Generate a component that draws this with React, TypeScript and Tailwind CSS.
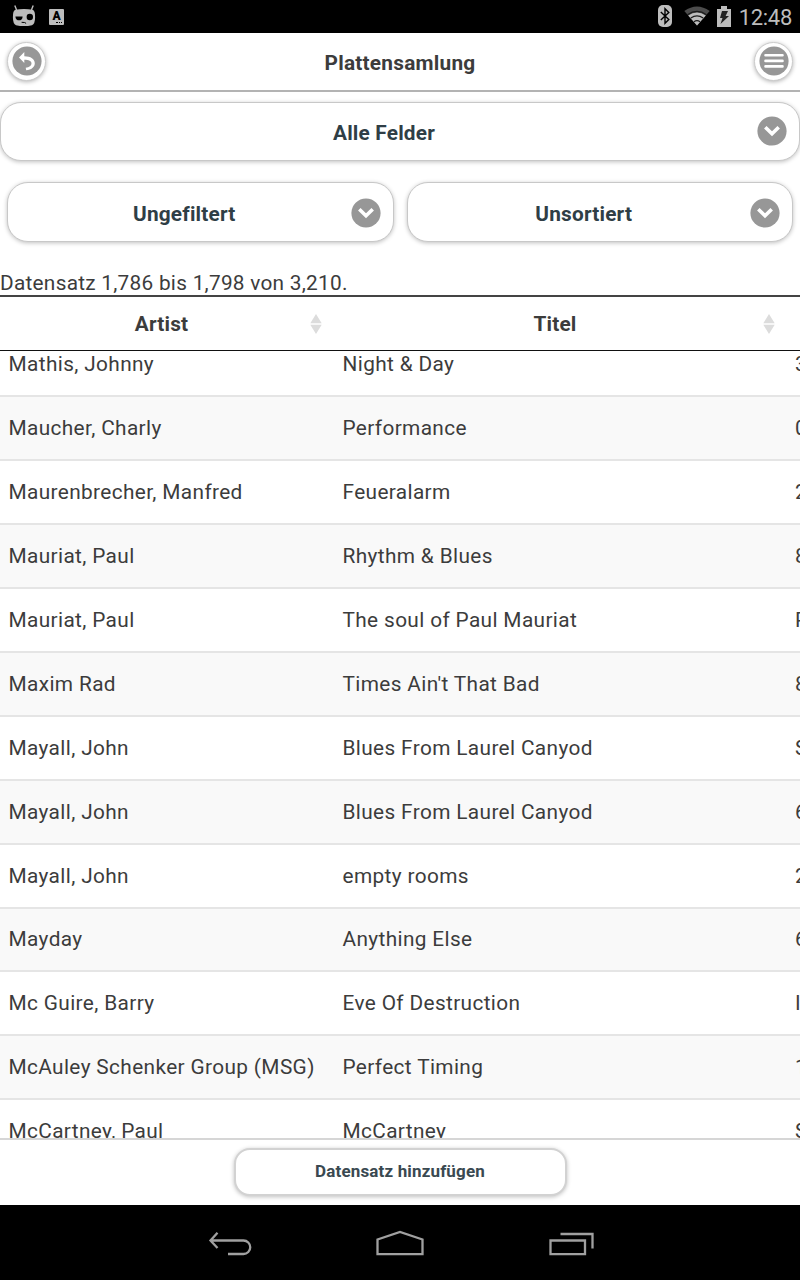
import React from 'react';
import clsx from 'clsx';

interface RecordRow {
  artist: string;
  title: string;
  number: string;
}

const records: RecordRow[] = [
  { artist: 'Mathis, Johnny', title: 'Night & Day', number: '3' },
  { artist: 'Maucher, Charly', title: 'Performance', number: '0' },
  { artist: 'Maurenbrecher, Manfred', title: 'Feueralarm', number: '2' },
  { artist: 'Mauriat, Paul', title: 'Rhythm & Blues', number: '8' },
  { artist: 'Mauriat, Paul', title: 'The soul of Paul Mauriat', number: 'P' },
  { artist: 'Maxim Rad', title: "Times Ain't That Bad", number: '8' },
  { artist: 'Mayall, John', title: 'Blues From Laurel Canyod', number: 'S' },
  { artist: 'Mayall, John', title: 'Blues From Laurel Canyod', number: '6' },
  { artist: 'Mayall, John', title: 'empty rooms', number: '2' },
  { artist: 'Mayday', title: 'Anything Else', number: '6' },
  { artist: 'Mc Guire, Barry', title: 'Eve Of Destruction', number: 'I' },
  { artist: 'McAuley Schenker Group (MSG)', title: 'Perfect Timing', number: '1' },
  { artist: 'McCartney, Paul', title: 'McCartney', number: 'S' },
];

const StatusBar: React.FC = () => (
  <div className="flex h-[33px] shrink-0 items-center bg-black pl-[12px] pr-[8px] text-[#bdbdbd]">
    <svg width="24" height="22" viewBox="0 0 24 22" className="mb-[2px]">
      <path d="M2.800 .5l1.800 4.500M21.200 .5L19.400 5" stroke="#bdbdbd" strokeWidth="1.4" fill="none" />
      <path d="M3.5 4.800Q12 3 20.5 4.800Q23.300 5.600 23.100 12.5Q23 19 20 20.200Q12 22 4 20.200Q1 19 .9 12.5Q.7 5.600 3.5 4.800Z" fill="#bdbdbd" />
      <path d="M3.400 11.400h7.200c.2 5.200-7.200 5.200-7.200 0Z" fill="#000" />
      <circle cx="17.8" cy="12" r="3.2" fill="#000" />
      <path d="M9.600 17.300l3 .2 1.500.9" stroke="#000" strokeWidth="1" fill="none" />
    </svg>
    <div className="ml-[13px] flex h-[16px] w-[15px] flex-col items-center rounded-[1px] bg-[#bdbdbd] text-black">
      <span className="h-[13px] text-[12px] leading-[15px] font-black">A</span>
      <span className="mr-[2px] h-px w-[6px] self-end border-t border-dotted border-black" />
    </div>
    <div className="ml-auto flex items-center">
      <svg width="14" height="22" viewBox="0 0 14 22" className="mb-px">
        <rect width="14" height="22" rx="5" fill="#bdbdbd" />
        <path d="M2.800 7l8 7.600L7 18.300V3.700l3.800 3.800-8 7.500" stroke="#000" strokeWidth="1.4" fill="none" />
      </svg>
      <svg width="26" height="20" viewBox="0 0 26 20" className="ml-[12px] mb-px">
        <path d="M13 19.5L.3 5Q13-4.200 25.700 5Z" fill="#4c4c4c" />
        <path d="M13 19.5L4.200 9.400Q13 3.400 21.800 9.400Z" fill="#bdbdbd" />
        <path d="M3.5 8.700Q13 2 22.5 8.700M6.800 12Q13 7.600 19.200 12M10 15.700Q13 13.700 16 15.700" stroke="#1b1b1b" strokeWidth="1.2" fill="none" />
      </svg>
      <svg width="14" height="21" viewBox="0 0 14 21" className="ml-[7px] mb-px">
        <path d="M4 0h6v3h4v18H0V3h4Z" fill="#bdbdbd" />
        <path d="M5 5h6L8.600 10H12L3.500 18l2-6H3Z" fill="#222" />
      </svg>
      <span className="ml-[8px] mt-[2px] text-[22px] leading-[32px] tracking-[-0.3px]">12:48</span>
    </div>
  </div>
);

interface RoundButtonProps {
  label: string;
  children: React.ReactNode;
}

const RoundButton: React.FC<RoundButtonProps> = ({ label, children }) => (
  <button
    aria-label={label}
    className="mb-px flex size-[39px] items-center justify-center rounded-full border border-[#ccc] bg-white shadow-[0_1px_4px_rgba(0,0,0,0.3)]"
  >
    <svg width="30" height="30" viewBox="0 0 30 30" className="shrink-0">
      <circle cx="15" cy="15" r="14.6" fill="#979797" />
      {children}
    </svg>
  </button>
);

interface SelectButtonProps {
  label: string;
  className?: string;
}

const SelectButton: React.FC<SelectButtonProps> = ({ label, className }) => (
  <button
    className={clsx(
      'flex items-center rounded-[21px] border border-[#c8c8c8] bg-white pr-[12px] font-bold text-[#2f3e46] shadow-[0_1px_4px_rgba(0,0,0,0.25)]',
      className,
    )}
  >
    <span className="flex-1 pt-[3px] pl-[10px] text-center">{label}</span>
    <svg width="30" height="30" viewBox="0 0 30 30">
      <circle cx="15" cy="15" r="14.6" fill="#979797" />
      <path d="M8.300 11.200L15 17.700l6.700-6.500" stroke="#fff" strokeWidth="3.6" fill="none" />
    </svg>
  </button>
);

const SortIcon: React.FC = () => (
  <svg width="12" height="20" viewBox="0 0 12 20">
    <path d="M6 0l5.700 9.300H.3ZM6 20L.3 10.700h11.400Z" fill="#dcdcdc" />
  </svg>
);

const App: React.FC = () => {
  return (
    <div className="flex h-[1280px] w-[800px] flex-col overflow-hidden bg-white font-[Roboto,sans-serif] text-[20.8px] leading-[28px] text-[#3c3c3c]">
      <StatusBar />

      <header className="flex h-[59px] shrink-0 items-center justify-between border-b-2 border-[#b3b3b3] px-[7px]">
        <RoundButton label="Zurück">
          <path d="M12.300 6v4.200c6.500 0 10.500 2.800 10.500 7 0 3.800-3.500 6.600-8.600 7.100l-.5-2.500c3.600-.6 5.800-2.300 5.800-4.400 0-2.400-2.600-3.700-7.200-3.700v3.400L7 11.400Z" fill="#fff" />
        </RoundButton>
        <h1 className="mt-[2px] font-bold tracking-[0.25px]">Plattensamlung</h1>
        <RoundButton label="Menü">
          <path d="M6.500 9.300h17M6.500 14.900h17M6.500 20.400h17" stroke="#fff" strokeWidth="2.6" strokeLinecap="round" />
        </RoundButton>
      </header>

      <SelectButton label="Alle Felder" className="mt-[10px] h-[59px] shrink-0 pb-px tracking-[0.2px]" />
      <div className="mt-[21px] flex shrink-0 gap-[13px] px-[7px] tracking-[0.2px]">
        <SelectButton label="Ungefiltert" className="h-[60px] flex-1 pt-px" />
        <SelectButton label="Unsortiert" className="h-[60px] flex-1 pt-px" />
      </div>

      <p className="mt-[27px] h-[26px] shrink-0 tracking-[0.27px]">Datensatz 1,786 bis 1,798 von 3,210.</p>

      <div className="flex h-[56px] shrink-0 items-center border-t-2 border-b border-t-[#444] border-b-[#111] font-bold tracking-[0.2px]">
        <div className="flex w-[329px] items-center pr-[7px]">
          <span className="flex-1 pl-[13px] text-center">Artist</span>
          <SortIcon />
        </div>
        <div className="flex w-[453px] items-center pr-[7px]">
          <span className="flex-1 pl-[18px] text-center">Titel</span>
          <SortIcon />
        </div>
      </div>

      <main className="min-h-0 flex-1 overflow-hidden">
        <div className="-mt-[19.66px]">
          {records.map((record, index) => (
            <div
              key={index}
              className={clsx(
                'flex h-[63.92px] items-center overflow-hidden border-t-2 border-[#e5e5e5] whitespace-nowrap tracking-[0.37px]',
                index % 2 === 1 && 'bg-[#f9f9f9]',
              )}
            >
              <span className="w-[334px] shrink-0 pl-[8.5px]">{record.artist}</span>
              <span className="w-[452px] shrink-0 pl-[8.5px]">{record.title}</span>
              <span className="shrink-0 pl-[9px]">{record.number}</span>
            </div>
          ))}
        </div>
      </main>

      <footer className="flex h-[67px] shrink-0 justify-center border-t-2 border-[#d6d6d6] pt-[8px]">
        <button className="h-[48px] w-[333px] rounded-[16px] border-2 border-[#d2d2d2] bg-white pb-[2px] text-[17px] font-bold tracking-[0.15px] text-[#3a4951] shadow-[0_1px_4px_rgba(0,0,0,0.25)]">
          Datensatz hinzufügen
        </button>
      </footer>

      <nav className="flex h-[75px] shrink-0 items-center bg-black pl-[208px] pt-px">
        <svg width="44" height="26" viewBox="0 0 44 26" fill="none" stroke="#a0a0a0" strokeWidth="2.3">
          <path d="M9.500 2.700L2.500 10.500l7 7.500M3 10.500H35.500a6.500 6.500 0 0 1 0 13.500H20" />
        </svg>
        <svg width="48" height="26" viewBox="0 0 48 26" fill="none" stroke="#a0a0a0" strokeWidth="2.3" className="ml-[124px]">
          <path d="M1.500 24.200V9.500L24 2 46.500 9.500V24.200Z" />
        </svg>
        <svg width="46" height="26" viewBox="0 0 46 26" fill="none" stroke="#a0a0a0" strokeWidth="2.3" className="ml-[125px]">
          <path d="M1.500 10.500h34.500V24.200H1.500ZM11.500 4H43.500V18.500" />
        </svg>
      </nav>
    </div>
  );
};

export default App;
